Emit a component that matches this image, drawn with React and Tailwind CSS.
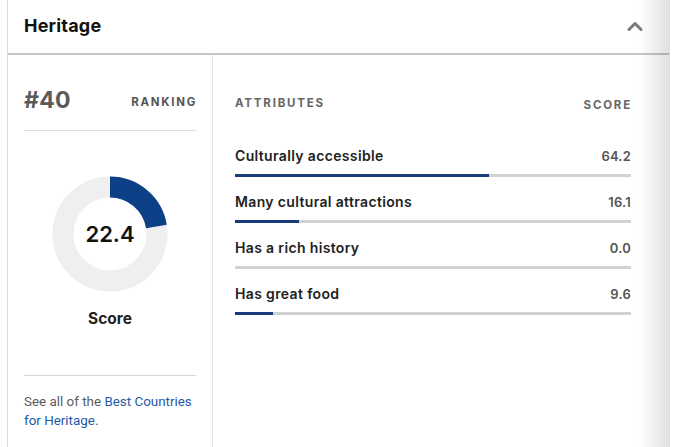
import React from "react";

const attributes = [
  { label: "Culturally accessible", score: 64.2 },
  { label: "Many cultural attractions", score: 16.1 },
  { label: "Has a rich history", score: 0.0 },
  { label: "Has great food", score: 9.6 },
];

function Donut({ value }) {
  const r = 47;
  const c = 2 * Math.PI * r;
  const filled = (value / 100) * c;
  return (
    <svg width="116" height="116" viewBox="0 0 116 116">
      <circle cx="58" cy="58" r={r} fill="none" stroke="#efefef" strokeWidth="21" />
      <circle
        cx="58"
        cy="58"
        r={r}
        fill="none"
        stroke="#0d3f87"
        strokeWidth="21"
        strokeDasharray={`${filled} ${c}`}
        transform="rotate(-90 58 58)"
      />
    </svg>
  );
}

export default function App() {
  return (
    <div className="w-[676px] h-[447px] bg-white overflow-hidden">
      <div className="relative ml-[7px] w-[663px] h-[447px] border-l border-r border-[#dcdcdc] bg-white">
        {/* header */}
        <div className="h-[55px] flex items-center justify-between pl-[16px] pr-[18px] pb-[2px] border-b-2 border-[#c6c6c6]">
          <span className="text-[18px] font-bold text-[#111] font-['Inter',sans-serif] tracking-[0.2px]">
            Heritage
          </span>
          <svg width="16" height="12" viewBox="0 0 16 12" className="mr-[8px]">
            <polyline
              points="2,9.5 8,3.5 14,9.5"
              fill="none"
              stroke="#7a7a7a"
              strokeWidth="3"
              strokeLinecap="round"
              strokeLinejoin="round"
            />
          </svg>
        </div>

        <div className="flex h-[392px]">
          {/* left column */}
          <div className="w-[205px] border-r border-[#e4e4e4] px-[16px] flex flex-col">
            <div className="h-[76px] pt-[16px] flex items-center justify-between border-b border-[#dedede]">
              <span className="text-[23px] font-bold text-[#5a5a5a] font-['Inter',sans-serif] leading-none tracking-[0.3px]">
                #40
              </span>
              <span className="text-[11.5px] font-bold tracking-[1.7px] text-[#555] font-['Inter',sans-serif] mt-[4px] -mr-[1px]">
                RANKING
              </span>
            </div>
            <div className="h-[245px] flex flex-col items-center border-b border-[#d6d6d6]">
              <div className="relative mt-[45px] w-[116px] h-[116px]">
                <Donut value={22.4} />
                <div className="absolute inset-0 flex items-center justify-center text-[22px] font-semibold text-[#111] font-['Inter',sans-serif]">
                  22.4
                </div>
              </div>
              <div className="mt-[15px] text-[15.5px] font-bold text-[#222] font-['Inter',sans-serif]">
                Score
              </div>
            </div>
            <div className="mt-[16px] text-[13.4px] leading-[19px] text-[#5c5c5c] font-['Roboto',sans-serif] whitespace-nowrap">
              <div>
                See all of the <a className="text-[#1f5aa8]">Best Countries</a>
              </div>
              <div>
                <a className="text-[#1f5aa8]">for Heritage.</a>
              </div>
            </div>
          </div>

          {/* right column */}
          <div className="flex-1 pl-[22px] pr-[38px] pt-[40px]">
            <div className="flex justify-between items-start font-['Inter',sans-serif] text-[11.5px] font-bold tracking-[1.8px] text-[#666]">
              <span className="leading-[16px]">ATTRIBUTES</span>
              <span className="leading-[16px] mt-[2px] -mr-[1px]">SCORE</span>
            </div>
            <div className="mt-[33px] flex flex-col gap-[15px]">
              {attributes.map((a) => (
                <div key={a.label}>
                  <div className="flex justify-between items-center leading-[20px] font-['Inter',sans-serif]">
                    <span className="text-[14px] font-semibold tracking-[0.35px] text-[#222]">{a.label}</span>
                    <span className="text-[13px] font-semibold tracking-[0.2px] text-[#555]">{a.score.toFixed(1)}</span>
                  </div>
                  <div className="mt-[8px] h-[3px] bg-[#d2d2d2]">
                    <div className="h-full bg-[#173d7a]" style={{ width: `${a.score}%` }} />
                  </div>
                </div>
              ))}
            </div>
          </div>
        </div>

        {/* edge fade on the right */}
        <div className="pointer-events-none absolute top-0 right-0 h-full w-[30px] bg-gradient-to-r from-transparent to-[#0000001f]" />
      </div>
    </div>
  );
}
